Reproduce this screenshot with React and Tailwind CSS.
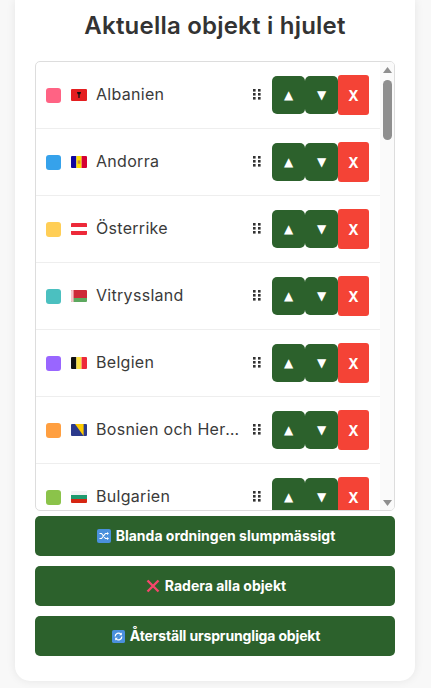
const items = [
  { name: "Albanien", color: "bg-[#ff6384]", flag: "al" },
  { name: "Andorra", color: "bg-[#36a2eb]", flag: "ad" },
  { name: "Österrike", color: "bg-[#ffce56]", flag: "at" },
  { name: "Vitryssland", color: "bg-[#4bc0c0]", flag: "by" },
  { name: "Belgien", color: "bg-[#9966ff]", flag: "be" },
  { name: "Bosnien och Hercegovina", color: "bg-[#ff9f40]", flag: "ba" },
  { name: "Bulgarien", color: "bg-[#8bc34a]", flag: "bg" },
];

function Flag({ code }) {
  return (
    <svg width="16" height="12" viewBox="0 0 16 12" className="block rounded-[1px]">
      {code === "al" && (
        <>
          <rect width="16" height="12" fill="#e41e20" />
          <path d="M6 3h4l-.6 2.2h-.7L8.6 9h-1.2l-.1-3.8h-.7z" fill="#111" />
        </>
      )}
      {code === "ad" && (
        <>
          <rect width="5.4" height="12" fill="#10069f" />
          <rect x="5.4" width="5.2" height="12" fill="#fedd00" />
          <rect x="10.6" width="5.4" height="12" fill="#d50032" />
          <rect x="6.7" y="4.4" width="2.6" height="3.4" fill="#c7883a" />
        </>
      )}
      {code === "at" && (
        <>
          <rect width="16" height="12" fill="#ed2939" />
          <rect y="4" width="16" height="4" fill="#fff" />
        </>
      )}
      {code === "by" && (
        <>
          <rect width="16" height="8" fill="#ce2939" />
          <rect y="8" width="16" height="4" fill="#5da85f" />
          <rect width="2.6" height="12" fill="#f7c4cc" />
        </>
      )}
      {code === "be" && (
        <>
          <rect width="5.4" height="12" fill="#111" />
          <rect x="5.4" width="5.2" height="12" fill="#fae042" />
          <rect x="10.6" width="5.4" height="12" fill="#ed2939" />
        </>
      )}
      {code === "ba" && (
        <>
          <rect width="16" height="12" fill="#2b3a8c" />
          <path d="M4 0h8.6v12z" fill="#fecb00" />
        </>
      )}
      {code === "bg" && (
        <>
          <rect width="16" height="4" fill="#f2f2f2" />
          <rect y="4" width="16" height="4" fill="#1f9a6e" />
          <rect y="8" width="16" height="4" fill="#d62612" />
        </>
      )}
    </svg>
  );
}

function Row({ item }) {
  return (
    <div className="flex items-center h-[67px] shrink-0 pl-[10px] pr-[11px] border-b border-[#eeeeee]">
      <span className={`w-[15px] h-[15px] rounded-[3px] shrink-0 ${item.color}`}></span>
      <span className="ml-[10px] shrink-0"><Flag code={item.flag} /></span>
      <span className="ml-[9px] w-[151px] -mt-[2px] truncate text-[16px] leading-[24px] tracking-[0.3px] text-[#3a3a3a]">{item.name}</span>
      <svg width="8" height="11" viewBox="0 0 8 11" className="ml-[6px] shrink-0 -mt-[2px]" fill="#333333">
        <rect x="0" y="0" width="2.6" height="2.6" />
        <rect x="5" y="0" width="2.6" height="2.6" />
        <rect x="0" y="4" width="2.6" height="2.6" />
        <rect x="5" y="4" width="2.6" height="2.6" />
        <rect x="0" y="8" width="2.6" height="2.6" />
        <rect x="5" y="8" width="2.6" height="2.6" />
      </svg>
      <div className="ml-auto flex items-center">
        <button className="w-[33px] h-[38px] rounded-[5px] bg-[#2c612c] text-white text-[12px] font-['DejaVu_Sans',sans-serif]">▲</button>
        <button className="w-[33px] h-[38px] rounded-[5px] bg-[#2c612c] text-white text-[12px] font-['DejaVu_Sans',sans-serif]">▼</button>
        <button className="w-[31px] h-[40px] rounded-[3px] bg-[#f44336] text-white text-[14px] font-bold">X</button>
      </div>
    </div>
  );
}

function ActionButton({ icon, children, className }) {
  return (
    <button className={`h-[40px] w-full rounded-[5px] bg-[#2c612c] pl-[2px] text-white text-[14px] font-bold flex items-center justify-center gap-[5px] ${className || ""}`}>
      {icon}
      <span className="-mt-[1px]">{children}</span>
    </button>
  );
}

const shuffleIcon = (
  <svg width="14" height="14" viewBox="0 0 14 14">
    <rect width="14" height="14" rx="2" fill="#4a90dc" />
    <path d="M2.5 4.5h2l4 5h2M2.5 9.5h2l4-5h2" stroke="#fff" strokeWidth="1.1" fill="none" />
    <path d="M10 3l2 1.5-2 1.5zM10 8l2 1.5-2 1.5z" fill="#fff" />
  </svg>
);

const crossIcon = (
  <svg width="14" height="14" viewBox="0 0 14 14">
    <path d="M1.5 1.5l11 11M12.5 1.5l-11 11" stroke="#f4476b" strokeWidth="2.4" />
  </svg>
);

const refreshIcon = (
  <svg width="13" height="13" viewBox="0 0 14 14">
    <rect width="14" height="14" rx="2" fill="#4a90dc" />
    <path d="M3.4 7a3.6 3.6 0 0 1 6.2-2.5M10.6 7a3.6 3.6 0 0 1-6.2 2.5" stroke="#fff" strokeWidth="1.3" fill="none" />
    <path d="M10.6 2.6v3h-3zM3.4 11.4v-3h3z" fill="#fff" />
  </svg>
);

export default function App() {
  return (
    <div className="h-[688px] overflow-hidden bg-[#f8f8f8] pl-[15px] pr-[16px] font-['Inter',sans-serif]">
      <div className="h-[681px] bg-white rounded-b-[15px] shadow-[0_0_10px_rgba(0,0,0,0.08)] px-[20px]">
        <h2 className="pt-[10px] h-[61px] text-center text-[24px] leading-[32px] font-semibold tracking-[0.22px] text-[#333333]">Aktuella objekt i hjulet</h2>
        <div className="h-[450px] flex border border-[#dddddd] rounded-[5px] overflow-hidden">
          <div className="flex-1 flex flex-col overflow-hidden">
            {items.map((item) => (
              <Row key={item.name} item={item} />
            ))}
          </div>
          <div className="w-[14px] shrink-0 bg-[#fafafa] flex flex-col items-center">
            <svg width="9" height="6" viewBox="0 0 9 6" className="mt-[5px]"><path d="M4.5 0L9 6H0z" fill="#8f8f8f" /></svg>
            <div className="w-[9px] h-[60px] mt-[7px] rounded-[5px] bg-[#8f8f8f]"></div>
            <svg width="9" height="6" viewBox="0 0 9 6" className="mt-auto mb-[4px]"><path d="M0 0h9L4.5 6z" fill="#8f8f8f" /></svg>
          </div>
        </div>
        <div className="mt-[5px] flex flex-col gap-[10px]">
          <ActionButton icon={shuffleIcon}>Blanda ordningen slumpmässigt</ActionButton>
          <ActionButton icon={crossIcon}>Radera alla objekt</ActionButton>
          <ActionButton icon={refreshIcon} className="tracking-[-0.15px]">Återställ ursprungliga objekt</ActionButton>
        </div>
      </div>
    </div>
  );
}
